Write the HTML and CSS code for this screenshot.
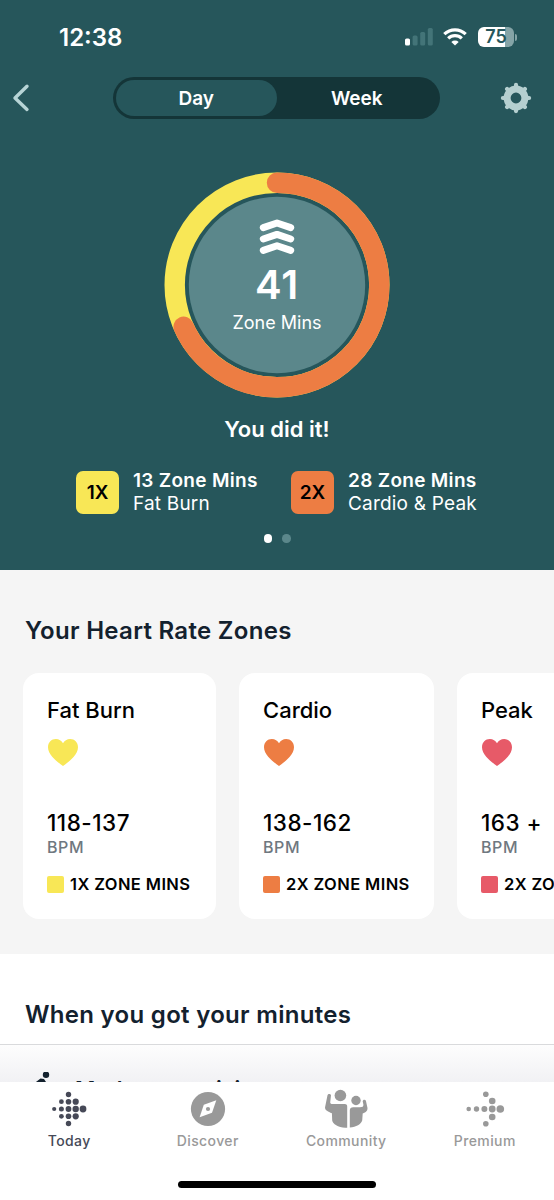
FILE: index.html
```html
<!DOCTYPE html>
<html lang="en">
<head>
    <meta charset="UTF-8">
    <meta name="viewport" content="width=device-width, initial-scale=1.0">
    <title>Zone Minutes</title>
    <link rel="stylesheet" href="styles.css">
</head>
<body>

    <div class="screen">
        <!-- Summary -->
        <div class="hero">
            <div class="status-bar">
                <span class="time">12:38</span>
                <div class="status-icons">
                    <svg class="signal" width="28" height="18" viewBox="0 0 28 18">
                        <rect x="0" y="10.5" width="5" height="7" rx="1.6" fill="#fff"/>
                        <rect x="7.6" y="7.5" width="5" height="10" rx="1.6" fill="#437478"/>
                        <rect x="15.2" y="4" width="5" height="13.5" rx="1.6" fill="#437478"/>
                        <rect x="22.8" y="0" width="5" height="17.5" rx="1.6" fill="#437478"/>
                    </svg>
                    <svg class="wifi" width="24" height="18" viewBox="0 0 24 18">
                        <path d="M1.3 6.2a15.4 15.4 0 0 1 21.4 0" fill="none" stroke="#fff" stroke-width="3.2"/>
                        <path d="M5.2 10.3a9.8 9.8 0 0 1 13.6 0" fill="none" stroke="#fff" stroke-width="3.2"/>
                        <path d="M12 17.6l-3.7-3.7a5.4 5.4 0 0 1 7.4 0z" fill="#fff"/>
                    </svg>
                    <div class="battery"><span>75</span></div>
                    <div class="battery-tip"></div>
                </div>
            </div>

            <div class="nav">
                <svg class="back" width="18" height="30" viewBox="0 0 18 30">
                    <path d="M15 3.2L3 15l12 11.4" fill="none" stroke="#b7d4d6" stroke-width="3.4" stroke-linecap="round" stroke-linejoin="round"/>
                </svg>
                <div class="switch">
                    <div class="option active">Day</div>
                    <div class="option">Week</div>
                </div>
                <svg class="gear" width="32" height="32" viewBox="-16 -16 32 32" stroke="#b5cfd0" fill="none">
                    <circle r="8.900" stroke-width="7"/>
                    <path d="M0-11V-13.100M0 11V13.100M-11 0H-13.100M11 0H13.100M7.800-7.800L8.900-8.900M-7.800 7.800L-8.900 8.900M-7.800-7.800L-8.900-8.900M7.800 7.800L8.900 8.900" stroke-width="4.200" stroke-linecap="round"/>
                </svg>
            </div>

            <div class="ring">
                <svg class="ring-chart" width="226" height="226" viewBox="-113 -113 226 226">
                    <circle r="88.2" fill="#5b878b"/>
                    <g fill="none" stroke-width="20.4" transform="rotate(-90)">
                        <circle r="102.3" stroke="#f8e756"/>
                        <circle r="102.3" stroke="#ed7d43" pathLength="41" stroke-dasharray="28 13" stroke-linecap="round"/>
                    </g>
                </svg>
                <div class="ring-text">
                    <svg width="36" height="36" viewBox="0 0 36 36">
                        <path d="M4.300 8.600L18 4l13.700 4.600M4.300 20L18 15.400 31.700 20M4.300 31.400L18 26.800l13.700 4.600" fill="none" stroke="#fff" stroke-width="7" stroke-linecap="round" stroke-linejoin="round"/>
                    </svg>
                    <div class="ring-value">41</div>
                    <div class="ring-label">Zone Mins</div>
                </div>
            </div>

            <div class="message">You did it!</div>

            <div class="legend">
                <div class="legend-item">
                    <div class="badge yellow">1X</div>
                    <div>
                        <div class="legend-value">13 Zone Mins</div>
                        <div class="legend-name">Fat Burn</div>
                    </div>
                </div>
                <div class="legend-item">
                    <div class="badge orange">2X</div>
                    <div>
                        <div class="legend-value">28 Zone Mins</div>
                        <div class="legend-name">Cardio &amp; Peak</div>
                    </div>
                </div>
            </div>

            <div class="dots">
                <span class="dot active"></span>
                <span class="dot"></span>
            </div>
        </div>

        <!-- Heart rate zones -->
        <div class="zones">
            <h2>Your Heart Rate Zones</h2>
            <div class="cards">
                <div class="card">
                    <div class="card-title">Fat Burn</div>
                    <svg class="heart" width="30" height="27" viewBox="0 0 30 27"><path fill="#f8e756" d="M15 27C10 23.200 0 16.500 0 8.200 0 3.300 3.500 0 7.800 0 11 0 13.600 1.700 15 4.300 16.400 1.700 19 0 22.200 0 26.500 0 30 3.300 30 8.200 30 16.500 20 23.200 15 27z"/></svg>
                    <div class="bpm">118-137</div>
                    <div class="unit">BPM</div>
                    <div class="multiplier"><span class="square yellow"></span>1X ZONE MINS</div>
                </div>
                <div class="card cardio">
                    <div class="card-title">Cardio</div>
                    <svg class="heart" width="30" height="27" viewBox="0 0 30 27"><path fill="#ed7d43" d="M15 27C10 23.200 0 16.500 0 8.200 0 3.300 3.500 0 7.800 0 11 0 13.600 1.700 15 4.300 16.400 1.700 19 0 22.200 0 26.500 0 30 3.300 30 8.200 30 16.500 20 23.200 15 27z"/></svg>
                    <div class="bpm">138-162</div>
                    <div class="unit">BPM</div>
                    <div class="multiplier"><span class="square orange"></span>2X ZONE MINS</div>
                </div>
                <div class="card">
                    <div class="card-title">Peak</div>
                    <svg class="heart" width="30" height="27" viewBox="0 0 30 27"><path fill="#e75a68" d="M15 27C10 23.200 0 16.500 0 8.200 0 3.300 3.500 0 7.800 0 11 0 13.600 1.700 15 4.300 16.400 1.700 19 0 22.200 0 26.500 0 30 3.300 30 8.200 30 16.500 20 23.200 15 27z"/></svg>
                    <div class="bpm">163 +</div>
                    <div class="unit">BPM</div>
                    <div class="multiplier"><span class="square red"></span>2X ZONE MINS</div>
                </div>
            </div>
        </div>

        <!-- Minutes list, runs under the tab bar -->
        <div class="minutes">
            <h2>When you got your minutes</h2>
            <div class="activity">
                <svg width="24" height="30" viewBox="0 0 24 30">
                    <circle cx="15" cy="2.700" r="3.200" fill="#13212e"/>
                    <path d="M3 11.500L9.500 6.500 13 7 15 10 13 15 17 19V28H14V20L9 15 6 24H3L8 11z" fill="#13212e"/>
                </svg>
                <span>Moderate activity</span>
            </div>
        </div>

        <!-- Tabs -->
        <div class="tab-bar">
            <div class="tab active">
                <svg width="44" height="40" viewBox="0 0 44 40" fill="currentColor">
                    <circle cx="21.500" cy="5.500" r="2.700"/>
                    <circle cx="14.400" cy="12.700" r="2.400"/><circle cx="21.500" cy="12.700" r="2.800"/><circle cx="28.700" cy="12.700" r="3.100"/>
                    <circle cx="7.200" cy="20" r="2.100"/><circle cx="14.400" cy="20" r="2.500"/><circle cx="21.500" cy="20" r="2.900"/><circle cx="28.700" cy="20" r="3.200"/><circle cx="36" cy="20" r="3.400"/>
                    <circle cx="14.400" cy="27.300" r="2.400"/><circle cx="21.500" cy="27.300" r="2.800"/><circle cx="28.700" cy="27.300" r="3.100"/>
                    <circle cx="21.500" cy="34.500" r="2.700"/>
                </svg>
                <span>Today</span>
            </div>
            <div class="tab">
                <svg width="44" height="40" viewBox="0 0 44 40">
                    <circle cx="22" cy="20" r="17.100" fill="#999"/>
                    <path d="M30.300 11.200L26 23.800 13.600 28.200 17.800 15.700z" fill="#fff"/>
                    <circle cx="22" cy="20" r="2.100" fill="#999"/>
                </svg>
                <span>Discover</span>
            </div>
            <div class="tab">
                <svg width="44" height="40" viewBox="0 0 44 40" fill="#999">
                    <circle cx="16.400" cy="6.500" r="5.800"/>
                    <circle cx="32" cy="11.500" r="4.700"/>
                    <path d="M3.500 6.300C4 4.500 6.600 4.700 7 6.300L6.200 13.500C6.500 15.200 8 15.200 9.700 15H20.700C22.700 15 23.200 16 23.200 17.500V38.700H21.200C14.200 38.500 8.700 35 8.200 31.500L7.900 24.300C4.200 22.500 1 21.500 1 18.500z"/>
                    <path d="M25.800 38.500V21.300C25.800 19 27.200 18.200 29.200 18.200H36C38.500 18.200 39.500 17.800 39.400 15.600L38.700 12.500C38.700 10.500 41.200 10.200 41.900 11.700L43.500 19C43.500 22 42.200 23 38.700 24.500L38.200 31.500C37.200 35 32.200 38.200 25.800 38.500z"/>
                </svg>
                <span>Community</span>
            </div>
            <div class="tab">
                <svg width="44" height="40" viewBox="0 0 44 40" fill="#999">
                    <circle cx="22.800" cy="5.300" r="2.800"/><circle cx="29.200" cy="12" r="3.300"/>
                    <circle cx="5.700" cy="20" r="2.300"/><circle cx="13.500" cy="20" r="2.700"/><circle cx="21.400" cy="20" r="3"/><circle cx="29.200" cy="20" r="3.400"/><circle cx="37.300" cy="20" r="3.800"/>
                    <circle cx="29.200" cy="28" r="3.300"/><circle cx="22.800" cy="34.700" r="2.800"/>
                </svg>
                <span>Premium</span>
            </div>
            <div class="home-indicator"></div>
        </div>
    </div>

</body>
</html>
```
FILE: styles.css
```css
body {
    font-family: 'Inter', 'Liberation Sans', sans-serif;
    background-color: #fff;
    margin: 0;
    color: #000;
}

.screen {
    display: flex;
    flex-direction: column;
    height: 1200px;
    overflow: hidden;
    white-space: nowrap;
}

/* Summary */
.hero {
    flex: none;
    box-sizing: border-box;
    height: 570px;
    background-color: #26565b;
    color: #fff;
}

.status-bar {
    display: flex;
    justify-content: space-between;
    align-items: center;
    height: 74px;
    padding: 0 37px 0 59px;
}

.time {
    font-size: 24px;
    font-weight: 600;
}

.status-icons {
    display: flex;
    align-items: center;
}

.wifi {
    margin: 0 11px 0 10px;
}

.battery {
    width: 36px;
    height: 20px;
    border-radius: 6px;
    background: linear-gradient(to right, #fff 75%, #85a4a7 75%);
    color: #26565b;
    font-size: 18px;
    font-weight: 600;
    line-height: 20px;
    text-align: center;
}

.battery-tip {
    width: 2px;
    height: 7px;
    margin-left: 1px;
    border-radius: 0 3px 3px 0;
    background-color: #85a4a7;
}

.nav {
    display: flex;
    align-items: center;
    justify-content: space-between;
    height: 48px;
    padding: 0 22px 0 12px;
}

.switch {
    display: flex;
    box-sizing: border-box;
    width: 327px;
    height: 42px;
    margin-left: 23px;
    padding: 3px;
    border-radius: 21px;
    background-color: #143538;
}

.option {
    flex: 1;
    border-radius: 18px;
    font-size: 19px;
    font-weight: 600;
    line-height: 38px;
    text-align: center;
}

.option.active {
    background-color: #26565b;
}

.ring {
    display: grid;
    justify-content: center;
    margin-top: 50px;
}

.ring-chart,
.ring-text {
    grid-area: 1 / 1;
}

.ring-text {
    display: flex;
    flex-direction: column;
    align-items: center;
    padding-top: 47px;
}

.ring-value {
    margin-top: 5px;
    font-size: 40px;
    font-weight: 600;
    line-height: 50px;
    letter-spacing: 0.8px;
}

.ring-label {
    margin-top: 1px;
    font-size: 18px;
    line-height: 24px;
}

.message {
    margin-top: 16px;
    font-size: 22px;
    font-weight: 600;
    line-height: 30px;
    text-align: center;
}

.legend {
    display: flex;
    gap: 32px;
    margin: 27px 0 0 76px;
}

.legend-item {
    display: flex;
    gap: 14px;
    width: 183px;
}

.badge {
    flex: none;
    width: 43px;
    height: 43px;
    border-radius: 7px;
    color: #000;
    font-size: 19px;
    font-weight: 600;
    line-height: 43px;
    text-align: center;
}

.yellow {
    background-color: #f8e756;
}

.orange {
    background-color: #ed7d43;
}

.red {
    background-color: #e75a68;
}

.legend-value {
    margin-top: -2px;
    font-size: 19px;
    font-weight: 600;
    line-height: 23px;
    letter-spacing: 0.3px;
}

.legend-name {
    font-size: 19px;
    line-height: 23px;
    letter-spacing: 0.2px;
}

.dots {
    display: flex;
    justify-content: center;
    gap: 10px;
    margin-top: 19px;
}

.dot {
    width: 8.5px;
    height: 8.5px;
    border-radius: 50%;
    background-color: #5b878b;
}

.dot.active {
    background-color: #fff;
}

/* Heart rate zones */
.zones {
    flex: none;
    box-sizing: border-box;
    height: 384px;
    padding: 45px 0 0 23px;
    background-color: #f5f5f5;
}

h2 {
    margin: 0 0 0 2px;
    color: #13212e;
    font-size: 24px;
    font-weight: 600;
    line-height: 32px;
    letter-spacing: 0.3px;
}

.cards {
    display: flex;
    gap: 23px;
    margin-top: 26px;
}

.card {
    flex: none;
    box-sizing: border-box;
    width: 193px;
    height: 246px;
    padding: 21px 0 0 24px;
    border-radius: 16px;
    background-color: #fff;
}

.card.cardio {
    width: 195px;
}

.card-title {
    font-size: 22px;
    font-weight: 500;
    line-height: 32px;
}

.heart {
    display: block;
    margin: 13px 0 0 1px;
}

.bpm {
    margin-top: 41px;
    font-size: 22.5px;
    font-weight: 500;
    line-height: 32px;
    letter-spacing: 0.5px;
}

.unit {
    color: #6f7880;
    font-size: 16px;
    font-weight: 500;
    line-height: 16px;
    letter-spacing: 0.6px;
}

.multiplier {
    display: flex;
    align-items: center;
    gap: 6px;
    margin-top: 17px;
    font-size: 16.5px;
    font-weight: 600;
    line-height: 24px;
    letter-spacing: 0.4px;
}

.square {
    width: 17px;
    height: 17px;
    border-radius: 2px;
}

/* Minutes list */
.minutes {
    flex: 1;
    min-height: 0;
    overflow: hidden;
    padding-top: 45px;
}

.minutes h2 {
    margin-left: 25px;
}

.activity {
    display: flex;
    gap: 20px;
    margin-top: 13px;
    padding: 27px 0 0 31px;
    border-top: 1px solid #d9dadc;
    background: linear-gradient(#fdfdfd, #f1f1f4 38px);
    color: #13212e;
    font-size: 22px;
    font-weight: 600;
    line-height: 35px;
}

/* Tabs */
.tab-bar {
    flex: none;
    box-sizing: border-box;
    display: grid;
    grid-template-columns: repeat(4, 1fr);
    height: 118px;
    padding-top: 7px;
    background-color: #fff;
}

.tab {
    display: flex;
    flex-direction: column;
    align-items: center;
    color: #999;
    font-size: 14px;
    font-weight: 500;
    line-height: 24px;
    letter-spacing: 0.4px;
}

.tab.active {
    color: #464957;
}

.home-indicator {
    grid-column: 1 / -1;
    justify-self: center;
    align-self: end;
    width: 198px;
    height: 7px;
    margin-bottom: 12px;
    border-radius: 4px;
    background-color: #000;
}
```
